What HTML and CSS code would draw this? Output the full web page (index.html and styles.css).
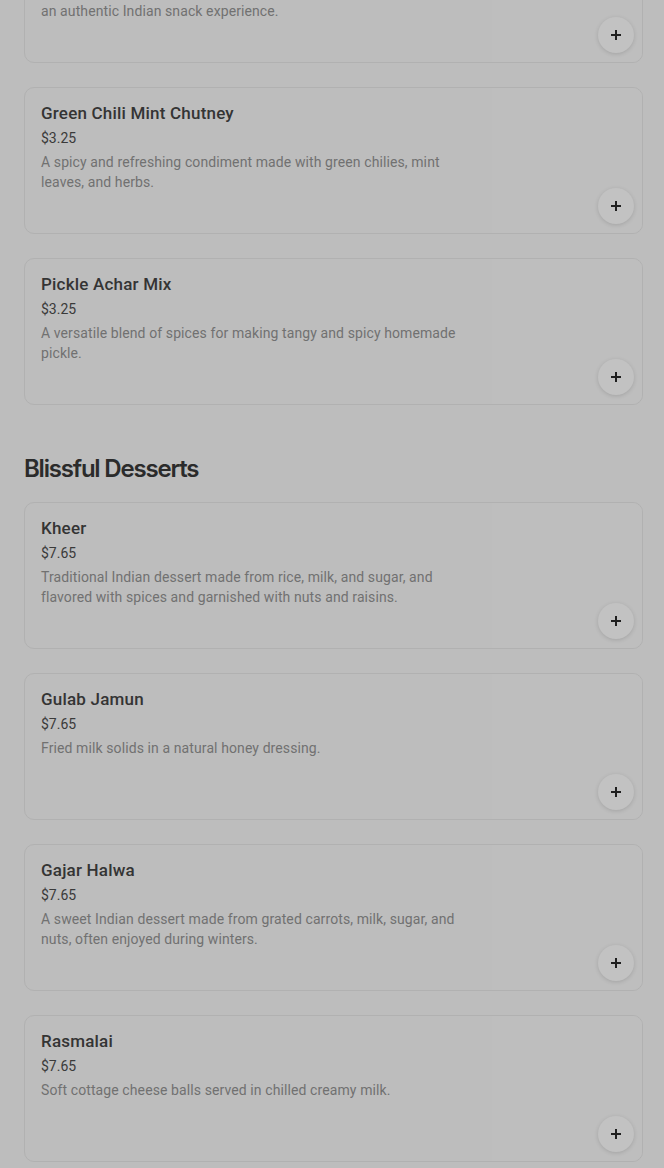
FILE: index.html
```html
<!DOCTYPE html>
<html lang="en">
<head>
<meta charset="utf-8">
<title>Menu</title>
<link rel="stylesheet" href="styles.css">
</head>
<body>
<main class="menu">
  <section class="section section-first">
    <div class="card-list">
      <article class="card">
        <div class="info">
          <h3 class="name">Masala Namkeen Mix</h3>
          <p class="price">$3.25</p>
          <p class="desc">A crunchy blend of fried lentils, peanuts, and spices that offers an&nbsp;authentic Indian snack experience.</p>
        </div>
        <div class="media"><button class="add" aria-label="Add"><svg viewBox="0 0 12 12" width="12" height="12"><path d="M6 1v10M1 6h10" stroke="currentColor" stroke-width="2" fill="none"/></svg></button></div>
      </article>
      <article class="card">
        <div class="info">
          <h3 class="name">Green Chili Mint Chutney</h3>
          <p class="price">$3.25</p>
          <p class="desc">A spicy and refreshing condiment made with green chilies, mint leaves, and herbs.</p>
        </div>
        <div class="media"><button class="add" aria-label="Add"><svg viewBox="0 0 12 12" width="12" height="12"><path d="M6 1v10M1 6h10" stroke="currentColor" stroke-width="2" fill="none"/></svg></button></div>
      </article>
      <article class="card">
        <div class="info">
          <h3 class="name">Pickle Achar Mix</h3>
          <p class="price">$3.25</p>
          <p class="desc">A versatile blend of spices for making tangy and spicy homemade pickle.</p>
        </div>
        <div class="media"><button class="add" aria-label="Add"><svg viewBox="0 0 12 12" width="12" height="12"><path d="M6 1v10M1 6h10" stroke="currentColor" stroke-width="2" fill="none"/></svg></button></div>
      </article>
    </div>
  </section>

  <section class="section">
    <h2 class="section-title">Blissful Desserts</h2>
    <div class="card-list">
      <article class="card">
        <div class="info">
          <h3 class="name">Kheer</h3>
          <p class="price">$7.65</p>
          <p class="desc">Traditional Indian dessert made from rice, milk, and sugar, and flavored with spices and garnished with nuts and raisins.</p>
        </div>
        <div class="media"><button class="add" aria-label="Add"><svg viewBox="0 0 12 12" width="12" height="12"><path d="M6 1v10M1 6h10" stroke="currentColor" stroke-width="2" fill="none"/></svg></button></div>
      </article>
      <article class="card">
        <div class="info">
          <h3 class="name">Gulab Jamun</h3>
          <p class="price">$7.65</p>
          <p class="desc">Fried milk solids in a natural honey dressing.</p>
        </div>
        <div class="media"><button class="add" aria-label="Add"><svg viewBox="0 0 12 12" width="12" height="12"><path d="M6 1v10M1 6h10" stroke="currentColor" stroke-width="2" fill="none"/></svg></button></div>
      </article>
      <article class="card">
        <div class="info">
          <h3 class="name">Gajar Halwa</h3>
          <p class="price">$7.65</p>
          <p class="desc">A sweet Indian dessert made from grated carrots, milk, sugar, and nuts, often enjoyed during winters.</p>
        </div>
        <div class="media"><button class="add" aria-label="Add"><svg viewBox="0 0 12 12" width="12" height="12"><path d="M6 1v10M1 6h10" stroke="currentColor" stroke-width="2" fill="none"/></svg></button></div>
      </article>
      <article class="card">
        <div class="info">
          <h3 class="name">Rasmalai</h3>
          <p class="price">$7.65</p>
          <p class="desc">Soft cottage cheese balls served in chilled creamy milk.</p>
        </div>
        <div class="media"><button class="add" aria-label="Add"><svg viewBox="0 0 12 12" width="12" height="12"><path d="M6 1v10M1 6h10" stroke="currentColor" stroke-width="2" fill="none"/></svg></button></div>
      </article>
    </div>
  </section>
</main>
</body>
</html>
```

FILE: styles.css
```css
* { box-sizing: border-box; }

html, body {
  margin: 0;
  padding: 0;
  background: #bdbdbd;
}

body {
  font-family: Roboto, "Noto Sans", "Liberation Sans", sans-serif;
  color: #2e2e2e;
  overflow: hidden;
}

.menu {
  padding: 0 21px 0 24px;
}

.section-first {
  margin-top: -84px;
}

.section-title {
  margin: 47px 0 16px;
  font-family: Inter, Roboto, sans-serif;
  font-size: 24px;
  line-height: 34px;
  font-weight: 600;
  letter-spacing: -1.2px;
  color: #2b2b2b;
}

.card-list {
  display: flex;
  flex-direction: column;
  gap: 24px;
}

.card {
  display: flex;
  border: 1px solid #b1b1b1;
  border-radius: 10px;
  background: #bdbdbd;
  overflow: hidden;
}

.info {
  flex: 1;
  min-width: 0;
  padding: 14px 16px;
}

.name {
  margin: 0;
  font-size: 17px;
  line-height: 22px;
  font-weight: 500;
  color: #343434;
  letter-spacing: 0.2px;
}

.price {
  margin: 4px 0 0;
  font-size: 14px;
  line-height: 20px;
  color: #3a3a3a;
}

.desc {
  margin: 4px 0 0;
  font-size: 14px;
  line-height: 20px;
  color: #717171;
  max-width: 440px;
  letter-spacing: 0.1px;
}

.media {
  width: 150px;
  height: 145px;
  flex: none;
  display: flex;
  align-items: flex-end;
  justify-content: flex-end;
  padding: 0 8px 9px 0;
  background: #bebebe;
}

.add {
  width: 36px;
  height: 36px;
  border-radius: 50%;
  border: none;
  padding: 0;
  background: #c2c2c2;
  color: #1f1f1f;
  display: flex;
  align-items: center;
  justify-content: center;
  box-shadow: 0 1px 4px rgba(0, 0, 0, 0.14);
}
```
